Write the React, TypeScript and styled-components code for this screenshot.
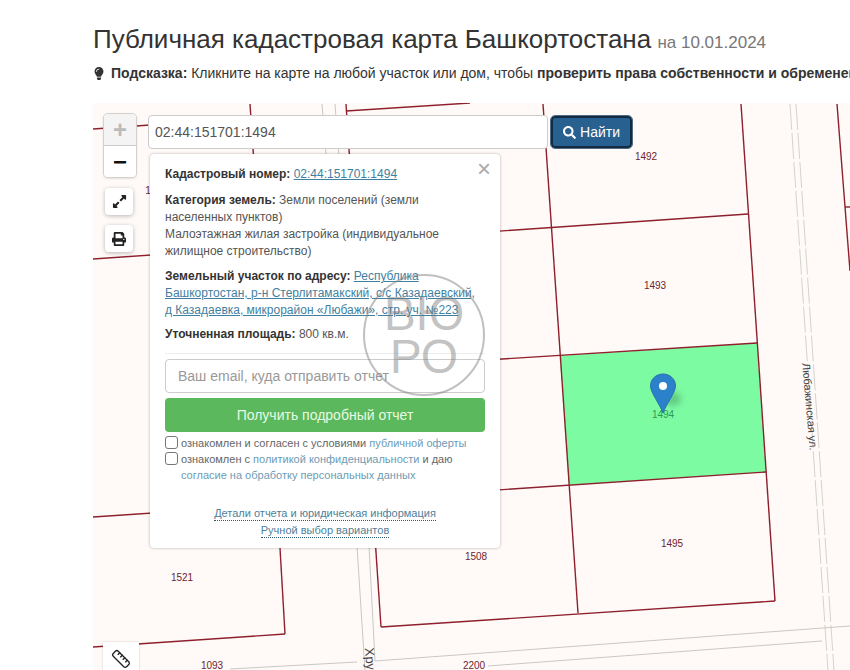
import React from 'react';
import styled, { createGlobalStyle } from 'styled-components';
import { FaExpandAlt, FaLightbulb, FaPrint, FaSearch } from 'react-icons/fa';
import { Ruler } from 'lucide-react';

const GlobalStyle = createGlobalStyle`
  html, body {
    margin: 0;
    padding: 0;
    background: #fff;
  }
  body {
    font-family: "Liberation Sans", Arial, sans-serif;
    color: #333;
  }
`;

const Page = styled.div`
  width: 850px;
  height: 670px;
  overflow: hidden;
  padding-left: 93px;
  box-sizing: border-box;
  display: flex;
  flex-direction: column;
`;

const CutLine = styled.div`
  height: 4px;
  overflow: hidden;
  font-size: 15px;
  line-height: 4px;
  padding-left: 110px;
  color: #333;
  & > span {
    position: relative;
    top: -6px;
  }
`;

const Title = styled.h1`
  margin: 20px 0 0;
  padding-top: 4px;
  font-size: 26px;
  line-height: 30px;
  font-weight: 400;
  white-space: nowrap;
  color: #333;
`;

const TitleDate = styled.small`
  font-size: 17px;
  color: #777;
  margin-left: -1px;
`;

const Hint = styled.p`
  margin: 6px 0 0;
  font-size: 14px;
  line-height: 18px;
  white-space: nowrap;
  display: flex;
  align-items: center;
  gap: 6px;
  & b {
    font-weight: 700;
  }
`;

const HintBulb = styled(FaLightbulb)`
  width: 12px;
  height: 13px;
  flex: none;
  color: #333;
`;

const MapArea = styled.div`
  position: relative;
  margin-top: 21px;
  width: 757px;
  height: 568px;
  flex: none;
  background: #fffaf7;
  overflow: hidden;
`;

const MapCanvas = styled.svg`
  display: block;
  width: 757px;
  height: 568px;
`;

const ParcelLabel = styled.text<{ $selected?: boolean }>`
  font-family: "Liberation Sans", Arial, sans-serif;
  font-size: 10px;
  fill: ${(p) => (p.$selected ? '#2c9a55' : '#6b2430')};
  text-anchor: middle;
`;

const StreetLabel = styled.text<{ $size: number }>`
  font-family: "Liberation Sans", Arial, sans-serif;
  font-size: ${(p) => p.$size}px;
  fill: #444;
  text-anchor: middle;
`;

const PinShadow = styled.ellipse`
  fill: #3f8f58;
  opacity: 0.45;
  filter: blur(3px);
`;

const ZoomBox = styled.div`
  position: absolute;
  left: 11px;
  top: 11px;
  width: 32px;
  border-radius: 4px;
  background: #fff;
  box-shadow: 0 0 0 1px #d4d0cc, 0 1px 3px rgba(0, 0, 0, 0.2);
  overflow: hidden;
`;

const ZoomButton = styled.div<{ $disabled?: boolean }>`
  height: 31px;
  display: flex;
  align-items: center;
  justify-content: center;
  font-size: 24px;
  font-weight: 700;
  line-height: 1;
  background: ${(p) => (p.$disabled ? '#f4f4f4' : '#fff')};
  color: ${(p) => (p.$disabled ? '#bbb' : '#111')};
  & + & {
    border-top: 1px solid #ccc;
  }
`;

const ToolButton = styled.div<{ $top: number }>`
  position: absolute;
  left: 12px;
  top: ${(p) => p.$top}px;
  width: 28px;
  height: 27px;
  border-radius: 4px;
  background: #fff;
  display: flex;
  align-items: center;
  justify-content: center;
  color: #222;
  box-shadow: 0 1px 4px rgba(0, 0, 0, 0.28);
`;

const RulerButton = styled.div`
  position: absolute;
  left: 10px;
  top: 539px;
  width: 36px;
  height: 36px;
  background: #fff;
  display: flex;
  align-items: flex-start;
  justify-content: center;
  padding-top: 7px;
  box-sizing: border-box;
  color: #222;
  box-shadow: 0 0 2px rgba(0, 0, 0, 0.2);
`;

const SearchBar = styled.div`
  position: absolute;
  left: 55px;
  top: 12px;
  display: flex;
  align-items: center;
  gap: 3px;
`;

const SearchInput = styled.input`
  width: 400px;
  height: 34px;
  box-sizing: border-box;
  padding: 0 6px;
  border: 1px solid #ccc;
  border-radius: 4px;
  background: #fff;
  color: #555;
  font: 14px "Liberation Sans", Arial, sans-serif;
  outline: none;
`;

const SearchButton = styled.button`
  width: 81px;
  height: 32px;
  padding: 0;
  border: 2px solid #122b40;
  border-radius: 4px;
  background: #286090;
  outline: 1px solid #4a6a85;
  color: #fff;
  font: 14px "Liberation Sans", Arial, sans-serif;
  display: flex;
  align-items: center;
  justify-content: center;
  gap: 4px;
`;

const Popup = styled.div`
  position: absolute;
  left: 57px;
  top: 51px;
  width: 350px;
  height: 394px;
  box-sizing: border-box;
  padding: 12px 15px 0;
  background: #fff;
  border-radius: 4px;
  box-shadow: 0 0 3px rgba(0, 0, 0, 0.3);
  font-size: 12px;
  line-height: 17px;
  color: #555;
`;

const CloseMark = styled.span`
  position: absolute;
  right: 9px;
  top: 3px;
  font-size: 24px;
  line-height: 24px;
  color: #aaa;
`;

const InfoBlock = styled.p<{ $gap: number }>`
  margin: 0 0 ${(p) => p.$gap}px;
  padding-right: 5px;
  & b {
    color: #333;
    font-weight: 700;
  }
`;

const InfoLink = styled.a`
  color: #3f7f9f;
  text-decoration: underline;
`;

const Divider = styled.div`
  height: 1px;
  background: #eee;
  margin-top: 9px;
`;

const EmailInput = styled.input`
  display: block;
  width: 320px;
  height: 34px;
  margin-top: 5px;
  box-sizing: border-box;
  padding: 0 12px;
  border: 1px solid #ccc;
  border-radius: 4px;
  font: 14px "Liberation Sans", Arial, sans-serif;
  outline: none;
  &::placeholder {
    color: #999;
  }
`;

const ReportButton = styled.button`
  display: block;
  width: 320px;
  height: 34px;
  margin-top: 5px;
  border: 0;
  border-radius: 4px;
  background: #5cb85c;
  color: #e6fbe6;
  font: 14px "Liberation Sans", Arial, sans-serif;
`;

const AgreeList = styled.div`
  margin-top: 3px;
`;

const AgreeRow = styled.label`
  display: flex;
  gap: 3px;
  font-size: 11px;
  line-height: 16px;
  color: #666;
  & a {
    color: #6d9bb5;
  }
`;

const AgreeBox = styled.input`
  appearance: none;
  flex: none;
  width: 13px;
  height: 13px;
  margin: 1px 0 0;
  border: 1px solid #777;
  border-radius: 3px;
  background: #fff;
`;

const BottomLinks = styled.div`
  margin-top: 24px;
  display: flex;
  flex-direction: column;
  align-items: center;
  gap: 3px;
  font-size: 11px;
  line-height: 13px;
`;

const DottedLink = styled.a`
  color: #4d7f9a;
  border-bottom: 1px dotted #2c5a75;
`;

const Stamp = styled.div`
  position: absolute;
  left: 213px;
  top: 120px;
  width: 122px;
  height: 122px;
  box-sizing: border-box;
  border: 2px solid rgba(130, 130, 130, 0.5);
  border-radius: 50%;
  display: flex;
  flex-direction: column;
  align-items: center;
  justify-content: center;
  font-size: 48px;
  line-height: 43px;
  color: rgba(120, 120, 120, 0.45);
  pointer-events: none;
`;

type Segment = [number, number, number, number];

const parcelLines: Segment[] = [
  [93, 128, 250, 117],
  [346, 110, 470, 102],
  [250, 103, 280, 547],
  [280, 547, 285, 633],
  [346, 103, 381, 626],
  [543, 103, 578, 612],
  [741, 103, 775, 600],
  [381, 626, 775, 600],
  [93, 646, 285, 633],
  [93, 258, 748, 213],
  [280, 372, 757, 342],
  [93, 516, 766, 471],
  [837, 103, 850, 270],
  [845, 206, 850, 206],
];

const roadLines: Segment[] = [
  [322, 103, 357, 545],
  [335, 103, 369, 545],
  [357, 545, 365, 670],
  [369, 545, 375, 660],
  [375, 660, 850, 625],
  [488, 665, 822, 640],
  [230, 668, 357, 661],
];

const dashedRoad: Segment[] = [
  [790, 103, 828, 670],
  [796, 103, 834, 670],
];

const labels: [string, number, number][] = [
  ['1492', 646, 159],
  ['1493', 655, 288],
  ['1495', 672, 546],
  ['1508', 476, 559],
  ['1521', 182, 580],
  ['1093', 212, 668],
  ['2200', 474, 668],
  ['1', 148, 193],
];

const App: React.FC = () => (
  <>
    <GlobalStyle />
    <Page>
      <CutLine><span>р</span></CutLine>
      <Title>
        Публичная кадастровая карта Башкортостана
        {' '}
        <TitleDate>на 10.01.2024</TitleDate>
      </Title>
      <Hint>
        <HintBulb />
        <span>
          <b>Подсказка:</b>
          {' Кликните на карте на любой участок или дом, чтобы '}
          <b>проверить права собственности и обременения</b>
        </span>
      </Hint>
      <MapArea>
        <MapCanvas viewBox="93 102 757 568">
          <polygon points="560,355 757,342 766,471 569,484" fill="#7dfba3" />
          {dashedRoad.map(([x1, y1, x2, y2]) => (
            <line key={x1} x1={x1} y1={y1} x2={x2} y2={y2} stroke="#d3d3ce" strokeDasharray="26 3" />
          ))}
          {roadLines.map(([x1, y1, x2, y2]) => (
            <line key={`${x1}-${y1}`} x1={x1} y1={y1} x2={x2} y2={y2} stroke="#c8c8c4" />
          ))}
          {parcelLines.map(([x1, y1, x2, y2]) => (
            <line key={`${x1}-${y1}`} x1={x1} y1={y1} x2={x2} y2={y2} stroke="#8e1f2c" strokeWidth="1.4" />
          ))}
          {labels.map(([text, x, y]) => (
            <ParcelLabel key={text} x={x} y={y}>{text}</ParcelLabel>
          ))}
          <ParcelLabel $selected x={663} y={417}>1494</ParcelLabel>
          <StreetLabel $size={11} transform="translate(806 406) rotate(85)">Любажинская ул.</StreetLabel>
          <StreetLabel $size={13} transform="translate(367 674) rotate(85)">Хрущева</StreetLabel>
          <PinShadow cx="673" cy="398" rx="8" ry="7" />
          <path d="M663 373c-7 0-12.500 5.200-12.500 11.800 0 6.800 9 17.700 12.500 27.200 3.500-9.500 12.500-20.400 12.500-27.200C675.500 378.200 670 373 663 373z" fill="#2b82cb" stroke="#2670ad" />
          <circle cx="663" cy="385" r="4" fill="#fff" />
        </MapCanvas>

        <ZoomBox>
          <ZoomButton $disabled>+</ZoomButton>
          <ZoomButton>−</ZoomButton>
        </ZoomBox>
        <ToolButton $top={85}><FaExpandAlt size={15} /></ToolButton>
        <ToolButton $top={122}><FaPrint size={14} /></ToolButton>
        <RulerButton><Ruler size={20} strokeWidth={1.6} /></RulerButton>

        <SearchBar>
          <SearchInput readOnly value="02:44:151701:1494" />
          <SearchButton>
            <FaSearch size={13} />
            Найти
          </SearchButton>
        </SearchBar>

        <Popup>
          <CloseMark>×</CloseMark>
          <InfoBlock $gap={9}>
            <b>Кадастровый номер:</b>
            {' '}
            <InfoLink>02:44:151701:1494</InfoLink>
          </InfoBlock>
          <InfoBlock $gap={8}>
            <b>Категория земель:</b>
            {' Земли поселений (земли населенных пунктов)'}
            <br />
            Малоэтажная жилая застройка (индивидуальное жилищное строительство)
          </InfoBlock>
          <InfoBlock $gap={7}>
            <b>Земельный участок по адресу:</b>
            {' '}
            <InfoLink>Республика Башкортостан, р-н Стерлитамакский, с/с Казадаевский, д Казадаевка, микрорайон «Любажи», стр. уч. №223</InfoLink>
          </InfoBlock>
          <InfoBlock $gap={10}>
            <b>Уточненная площадь:</b>
            {' 800 кв.м.'}
          </InfoBlock>
          <Divider />
          <EmailInput placeholder="Ваш email, куда отправить отчет" />
          <ReportButton>Получить подробный отчет</ReportButton>
          <AgreeList>
            <AgreeRow>
              <AgreeBox type="checkbox" />
              <span>
                ознакомлен и согласен с условиями
                {' '}
                <a>публичной оферты</a>
              </span>
            </AgreeRow>
            <AgreeRow>
              <AgreeBox type="checkbox" />
              <span>
                ознакомлен с
                {' '}
                <a>политикой конфиденциальности</a>
                {' и даю '}
                <a>согласие на обработку персональных данных</a>
              </span>
            </AgreeRow>
          </AgreeList>
          <BottomLinks>
            <DottedLink>Детали отчета и юридическая информация</DottedLink>
            <DottedLink>Ручной выбор вариантов</DottedLink>
          </BottomLinks>
          <Stamp>
            <span>ВЮ</span>
            <span>РО</span>
          </Stamp>
        </Popup>
      </MapArea>
    </Page>
  </>
);

export default App;
